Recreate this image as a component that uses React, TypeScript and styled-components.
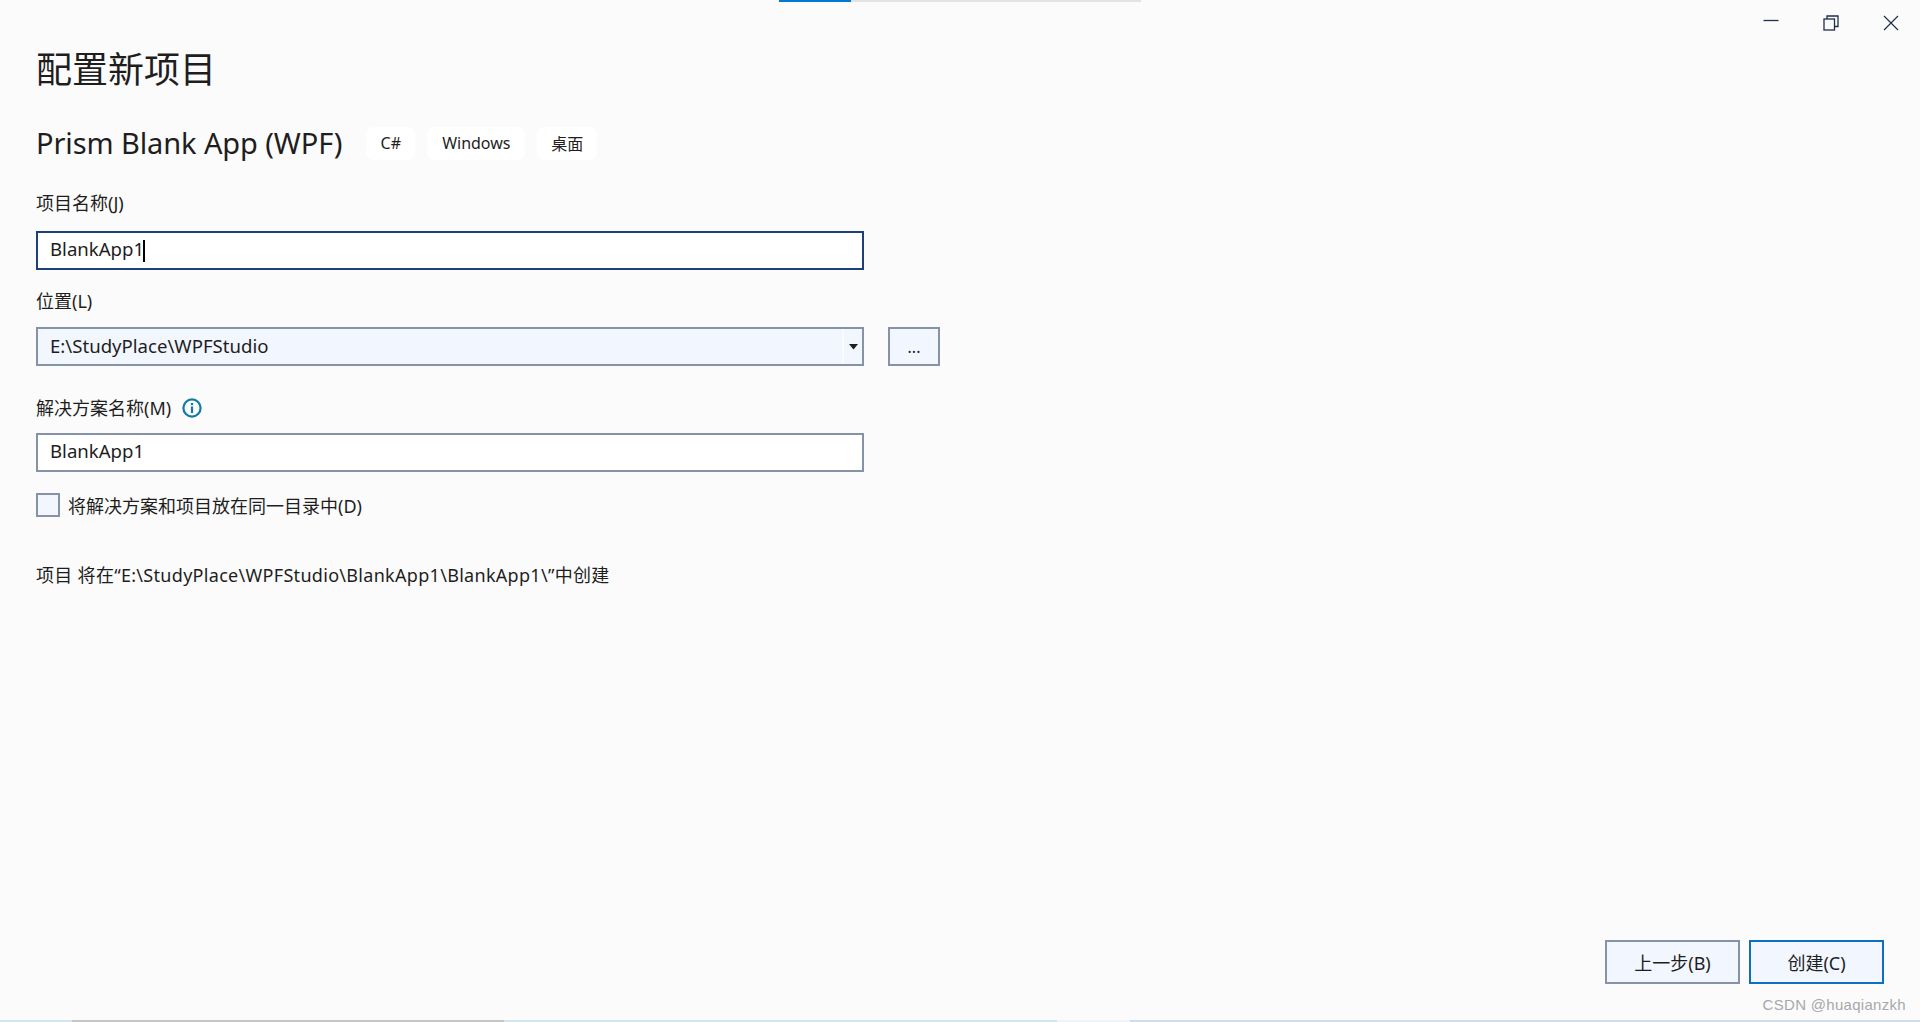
import React from "react";
import styled, { createGlobalStyle } from "styled-components";

const sans = `"Noto Sans", "Open Sans", "Noto Sans CJK SC", sans-serif`;

const Global = createGlobalStyle`
  html, body { margin: 0; padding: 0; background: #fbfbfb; }
  body { font-family: ${sans}; color: #1e1e1e; overflow: hidden; }
`;

const Page = styled.div`
  width: 1920px;
  height: 1022px;
  background: #fbfbfb;
  display: flex;
  flex-direction: column;
  overflow: hidden;
`;

const ProgressTrack = styled.div`
  display: flex;
  height: 2px;
  margin-left: 779px;
  width: 362px;
  background: #e3e3e3;
  flex: none;
`;
const ProgressFill = styled.div`
  width: 72px;
  background: #0078d4;
`;

const WindowBar = styled.div`
  display: flex;
  justify-content: flex-end;
  flex: none;
  height: 34px;
`;
const WinButton = styled.div`
  width: 60px;
  height: 34px;
  box-sizing: border-box;
  padding: 7px 0 0 2px;
  display: flex;
  align-items: center;
  justify-content: center;
`;

const Content = styled.div`
  flex: 1;
  display: flex;
  flex-direction: column;
  padding-left: 36px;
  min-height: 0;
`;

const Title = styled.h1`
  margin: 8px 0 0;
  font-size: 36px;
  line-height: 46px;
  font-weight: 400;
  color: #1e1e1e;
  font-family: "Noto Sans CJK SC", sans-serif;
`;

const TemplateRow = styled.div`
  display: flex;
  align-items: center;
  margin-top: 34px;
  height: 38px;
`;
const TemplateName = styled.div`
  font-size: 29px;
  line-height: 38px;
  margin-right: 24px;
  letter-spacing: -0.1px;
`;
const Tag = styled.div<{ $w: number }>`
  width: ${(p) => p.$w}px;
  height: 33px;
  margin-right: 12px;
  border-radius: 8px;
  background: #ffffff;
  display: flex;
  align-items: center;
  justify-content: center;
  font-size: 16px;
`;

const Label = styled.div<{ $top: number }>`
  margin-top: ${(p) => p.$top}px;
  height: 24px;
  font-size: 18px;
  line-height: 24px;
  display: flex;
  align-items: center;
  gap: 11px;
`;

const Field = styled.div<{ $focus?: boolean; $tint?: boolean; $top: number }>`
  margin-top: ${(p) => p.$top}px;
  width: 828px;
  height: 39px;
  box-sizing: border-box;
  border: 2px solid ${(p) => (p.$focus ? "#1f3f78" : "#8592a8")};
  background: ${(p) => (p.$tint ? "#f2f6fe" : "#ffffff")};
  padding: 0 0 ${(p) => (p.$tint ? 2 : 4)}px 12px;
  font-size: 18.6px;
  display: flex;
  align-items: center;
`;
const Caret = styled.span`
  display: inline-block;
  width: 2px;
  height: 22px;
  background: #000;
  margin: 4px 0 0 -1px;
`;
const FieldRow = styled.div`
  display: flex;
  align-items: flex-end;
  gap: 24px;
`;
const DropZone = styled.div`
  margin: 0 0 -2px auto;
  width: 20px;
  height: 35px;
  box-sizing: border-box;
  border-left: 2px solid #fbfcff;
  display: flex;
  align-items: center;
  justify-content: center;
`;
const Browse = styled.div`
  width: 52px;
  height: 39px;
  box-sizing: border-box;
  border: 2px solid #8592a8;
  background: #f2f6fe;
  display: flex;
  align-items: center;
  justify-content: center;
  font-size: 16px;
`;

const CheckRow = styled.div`
  display: flex;
  align-items: center;
  gap: 8px;
  margin-top: 21px;
  height: 24px;
  font-size: 18px;
`;
const CheckBox = styled.div`
  width: 24px;
  height: 24px;
  box-sizing: border-box;
  border: 2px solid #8592a8;
  background: #f2f6fe;
`;

const PathNote = styled.div`
  margin-top: 46px;
  font-size: 18px;
  line-height: 24px;
  letter-spacing: 0.3px;
`;

const Footer = styled.div`
  margin-top: auto;
  display: flex;
  justify-content: flex-end;
  gap: 9px;
  padding: 0 36px 36px 0;
  position: relative;
`;
const ActionButton = styled.div<{ $primary?: boolean }>`
  width: 135px;
  height: 44px;
  box-sizing: border-box;
  border: 2px solid ${(p) => (p.$primary ? "#0b6fc2" : "#8592a8")};
  background: #f2f6fe;
  display: flex;
  align-items: center;
  justify-content: center;
  font-size: 18px;
`;
const Watermark = styled.div`
  position: absolute;
  right: 14px;
  bottom: 7px;
  font-family: "Liberation Sans", sans-serif;
  font-size: 15px;
  color: #a8a8a8;
  letter-spacing: 0.3px;
`;

const BottomStrip = styled.div`
  height: 2px;
  flex: none;
  display: flex;
`;
const StripPart = styled.div<{ $w: number; $c: string }>`
  width: ${(p) => p.$w}px;
  background: ${(p) => p.$c};
`;

const strip: [number, string][] = [
  [72, "#d3e6ef"],
  [432, "#c6c6c6"],
  [553, "#d3e6ef"],
  [73, "#eef4f8"],
  [790, "#cfdcea"],
];

export default function App() {
  return (
    <Page>
      <Global />
      <ProgressTrack>
        <ProgressFill />
      </ProgressTrack>
      <WindowBar>
        <WinButton>
          <svg width="16" height="16" viewBox="0 0 16 16">
            <path d="M0.5 5.5H15.5" stroke="#1f2f4d" strokeWidth="1.3" />
          </svg>
        </WinButton>
        <WinButton>
          <svg width="16" height="16" viewBox="0 0 16 16" fill="none" stroke="#1f2f4d" strokeWidth="1.3">
            <rect x="1" y="4" width="10.5" height="11" />
            <path d="M4 4V1H15V11.5H11.5" />
          </svg>
        </WinButton>
        <WinButton>
          <svg width="16" height="16" viewBox="0 0 16 16" fill="none" stroke="#1f2f4d" strokeWidth="1.2">
            <path d="M1 1L15 15M15 1L1 15" />
          </svg>
        </WinButton>
      </WindowBar>
      <Content>
        <Title>配置新项目</Title>
        <TemplateRow>
          <TemplateName>Prism Blank App (WPF)</TemplateName>
          <Tag $w={49}>C#</Tag>
          <Tag $w={98}>Windows</Tag>
          <Tag $w={60}>桌面</Tag>
        </TemplateRow>
        <Label $top={29}>项目名称(J)</Label>
        <Field $focus $top={16}>
          BlankApp1
          <Caret />
        </Field>
        <Label $top={19}>位置(L)</Label>
        <FieldRow>
          <Field $tint $top={14}>
            E:\StudyPlace\WPFStudio
            <DropZone>
              <svg width="9" height="6" viewBox="0 0 9 6">
                <path d="M0 0H9L4.5 5.5Z" fill="#1e1e1e" />
              </svg>
            </DropZone>
          </Field>
          <Browse>...</Browse>
        </FieldRow>
        <Label $top={30}>
          解决方案名称(M)
          <svg width="20" height="20" viewBox="0 0 20 20" fill="none">
            <circle cx="10" cy="10" r="8.6" stroke="#0e7aa6" strokeWidth="2.2" />
            <rect x="8.9" y="8.5" width="2.2" height="6.5" fill="#0e7aa6" />
            <rect x="8.9" y="5" width="2.2" height="2.2" fill="#0e7aa6" />
          </svg>
        </Label>
        <Field $top={13}>BlankApp1</Field>
        <CheckRow>
          <CheckBox />
          将解决方案和项目放在同一目录中(D)
        </CheckRow>
        <PathNote>项目 将在“E:\StudyPlace\WPFStudio\BlankApp1\BlankApp1\”中创建</PathNote>
        <Footer>
          <ActionButton>上一步(B)</ActionButton>
          <ActionButton $primary>创建(C)</ActionButton>
          <Watermark>CSDN @huaqianzkh</Watermark>
        </Footer>
      </Content>
      <BottomStrip>
        {strip.map(([w, c], i) => (
          <StripPart key={i} $w={w} $c={c} />
        ))}
      </BottomStrip>
    </Page>
  );
}
